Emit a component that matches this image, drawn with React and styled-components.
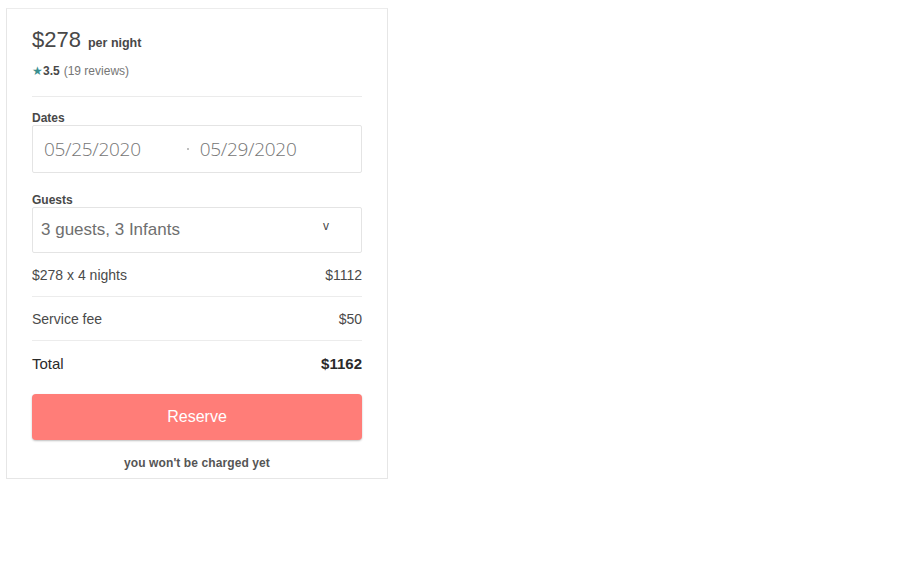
import React from "react";
import styled, { createGlobalStyle } from "styled-components";

const Global = createGlobalStyle`
  html, body { margin: 0; padding: 0; background: #fff; }
  body { font-family: "Liberation Sans", Arial, sans-serif; color: #484848; }
  * { box-sizing: border-box; }
`;

const Page = styled.div`
  padding: 8px 0 0 6px;
  width: 916px;
  height: 564px;
`;

const Card = styled.div`
  width: 382px;
  border: 1px solid #e6e6e6;
  border-top-color: #ececec;
  padding: 18px 25px 8px 25px;
  display: flex;
  flex-direction: column;
`;

const PriceLine = styled.div`
  display: flex;
  align-items: baseline;
  gap: 7px;
  height: 29px;
`;

const Price = styled.span`
  font-size: 22px;
  color: #484848;
`;

const PerNight = styled.span`
  font-size: 12.5px;
  font-weight: bold;
  color: #484848;
`;

const Rating = styled.div`
  margin-top: 8px;
  font-size: 12px;
  display: flex;
  align-items: center;
  color: #767676;
`;

const Star = styled.span`
  color: #3a8f8f;
  font-size: 12px;
`;

const Score = styled.span`
  font-weight: bold;
  color: #484848;
  margin-right: 4px;
`;

const Divider = styled.div`
  height: 1px;
  background: #ebebeb;
  margin-top: ${p => p.$top || 0}px;
`;

const Label = styled.div`
  font-size: 12px;
  font-weight: bold;
  color: #484848;
  margin-top: ${p => p.$top}px;
`;

const Box = styled.div`
  border: 1px solid #e4e4e4;
  border-radius: 2px;
  height: ${p => p.$h}px;
  display: flex;
  align-items: center;
`;

const DateText = styled.span`
  font-size: 19px;
  color: #757575;
  font-family: "Open Sans", "Liberation Sans", sans-serif;
  font-weight: 300;
  letter-spacing: -0.3px;
`;

const DateSep = styled.span`
  width: 2px;
  height: 2px;
  background: #aaa;
  border-radius: 50%;
  margin: 0 11px 0 46px;
`;

const DateField = styled.div`
  padding-left: 11px;
  display: flex;
  align-items: center;
`;

const GuestText = styled.span`
  font-size: 17px;
  color: #6f6f6f;
  padding-left: 8px;
  flex: 1;
`;

const Caret = styled.span`
  font-size: 12px;
  color: #484848;
  margin-right: 32px;
  margin-top: -9px;
`;

const Row = styled.div`
  display: flex;
  justify-content: space-between;
  align-items: center;
  height: 44px;
  font-size: 14px;
  color: #4a4a4a;
  border-bottom: ${p => (p.$last ? "none" : "1px solid #ececec")};
`;

const TotalLabel = styled.span`
  font-size: 15px;
  color: #2a2a2a;
`;

const TotalValue = styled.span`
  font-size: 15px;
  font-weight: bold;
  color: #2a2a2a;
`;

const Button = styled.button`
  margin-top: 9px;
  height: 46px;
  width: 100%;
  border: none;
  border-radius: 4px;
  background: #ff7d78;
  color: #fff;
  font-family: "Liberation Sans", Arial, sans-serif;
  font-size: 16px;
  box-shadow: 0 1px 2px rgba(0, 0, 0, 0.25);
`;

const Note = styled.div`
  text-align: center;
  font-size: 12px;
  font-weight: bold;
  color: #555;
  margin-top: 16px;
  letter-spacing: 0.1px;
`;

export default function App() {
  return (
    <Page>
      <Global />
      <Card>
        <PriceLine>
          <Price>$278</Price>
          <PerNight>per night</PerNight>
        </PriceLine>
        <Rating>
          <Star>★</Star>
          <Score>3.5</Score>
          (19 reviews)
        </Rating>
        <Divider $top={18} />
        <Label $top={14}>Dates</Label>
        <Box $h={48}>
          <DateField>
            <DateText>05/25/2020</DateText>
            <DateSep />
            <DateText>05/29/2020</DateText>
          </DateField>
        </Box>
        <Label $top={20}>Guests</Label>
        <Box $h={46}>
          <GuestText>3 guests, 3 Infants</GuestText>
          <Caret>v</Caret>
        </Box>
        <Row>
          <span>$278 x 4 nights</span>
          <span>$1112</span>
        </Row>
        <Row>
          <span>Service fee</span>
          <span>$50</span>
        </Row>
        <Row $last>
          <TotalLabel>Total</TotalLabel>
          <TotalValue>$1162</TotalValue>
        </Row>
        <Button>Reserve</Button>
        <Note>you won't be charged yet</Note>
      </Card>
    </Page>
  );
}
